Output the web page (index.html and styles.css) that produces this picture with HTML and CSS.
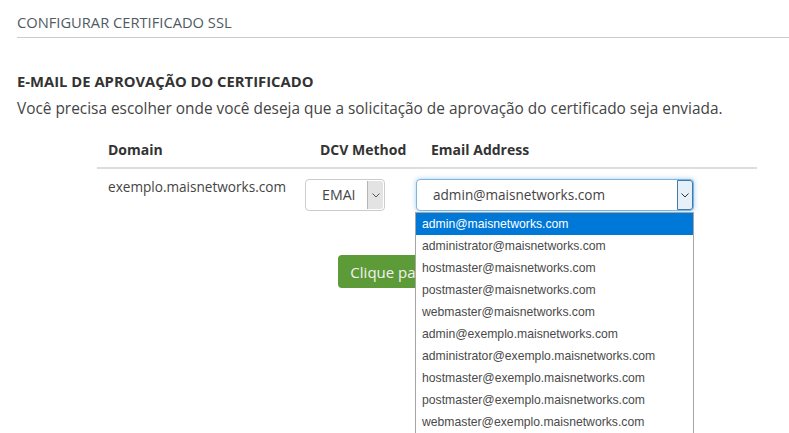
FILE: index.html
```html
<!DOCTYPE html>
<html lang="pt-BR">
<head>
    <meta charset="UTF-8">
    <meta name="viewport" content="width=device-width, initial-scale=1.0">
    <title>Configurar Certificado SSL</title>
    <link rel="stylesheet" href="styles.css">
</head>
<body>
    <div class="page">
        <h2 class="title">CONFIGURAR CERTIFICADO SSL</h2>

        <h3 class="section">E-MAIL DE APROVAÇÃO DO CERTIFICADO</h3>
        <p class="intro">Você precisa escolher onde você deseja que a solicitação de aprovação do certificado seja enviada.</p>

        <div class="dcv-table">
            <div class="th th-domain">Domain</div>
            <div class="th th-method">DCV Method</div>
            <div class="th th-email">Email Address</div>

            <div class="td td-domain">exemplo.maisnetworks.com</div>
            <div class="td td-method">
                <div class="select select-method">
                    <span class="select-value">EMAI</span>
                    <span class="select-arrow">
                        <svg width="8" height="5" viewBox="0 0 8 5"><path d="M0.5 0.5 L4 4 L7.5 0.5" fill="none" stroke="#555" stroke-width="1"/></svg>
                    </span>
                </div>
            </div>
            <div class="td td-email">
                <div class="select select-email">
                    <span class="select-value">admin@maisnetworks.com</span>
                    <span class="select-arrow">
                        <svg width="8" height="5" viewBox="0 0 8 5"><path d="M0.5 0.5 L4 4 L7.5 0.5" fill="none" stroke="#333" stroke-width="1"/></svg>
                    </span>
                    <ul class="options">
                        <li class="selected">admin@maisnetworks.com</li>
                        <li>administrator@maisnetworks.com</li>
                        <li>hostmaster@maisnetworks.com</li>
                        <li>postmaster@maisnetworks.com</li>
                        <li>webmaster@maisnetworks.com</li>
                        <li>admin@exemplo.maisnetworks.com</li>
                        <li>administrator@exemplo.maisnetworks.com</li>
                        <li>hostmaster@exemplo.maisnetworks.com</li>
                        <li>postmaster@exemplo.maisnetworks.com</li>
                        <li>webmaster@exemplo.maisnetworks.com</li>
                    </ul>
                </div>
            </div>
        </div>

        <div class="actions">
            <button class="btn-continue">Clique para Continuar</button>
        </div>
    </div>
</body>
</html>
```

FILE: styles.css
```css
html, body {
    height: 100%;
}

body {
    margin: 0;
    font-family: 'Open Sans', sans-serif;
    color: #444;
    background: #fff;
    overflow: hidden;
}

.page {
    min-height: 100%;
    box-sizing: border-box;
    padding: 12px 0 0 17px;
}

.title {
    margin: 0;
    padding-bottom: 5px;
    border-bottom: 1px solid #ccc;
    font-size: 14.7px;
    line-height: 20px;
    font-weight: 400;
    color: #4f5b63;
}

.section {
    margin: 33px 0 0;
    font-size: 14.8px;
    line-height: 20px;
    font-weight: 700;
    color: #333;
}

.intro {
    margin: 7px 0 0;
    font-size: 15.4px;
    line-height: 22px;
    color: #444;
}

.dcv-table {
    display: grid;
    grid-template-columns: 200px 111px 1fr;
    width: 660px;
    margin: 20px 0 0 80px;
    font-size: 14px;
    line-height: 20px;
}

.th {
    font-weight: 700;
    color: #333;
    padding-bottom: 7px;
    border-bottom: 2px solid #ddd;
}

.th-domain, .td-domain {
    padding-left: 11px;
}

.th-method, .th-email {
    padding-left: 23px;
}

.td {
    padding-bottom: 10px;
}

.td-domain {
    padding-top: 8px;
    font-size: 13.6px;
}

.td-method, .td-email {
    padding-top: 10px;
    padding-left: 8px;
}

.select {
    position: relative;
    display: flex;
    align-items: stretch;
    height: 32px;
    box-sizing: border-box;
    border: 1px solid #ccc;
    border-radius: 4px;
    background: #fff;
}

.select-value {
    flex: 1;
    display: flex;
    align-items: center;
    color: #444;
}

.select-arrow {
    display: flex;
    align-items: center;
    justify-content: center;
    width: 16px;
    margin: 1px 1px 1px 0;
    box-sizing: border-box;
    border-left: 1px solid #b5b5b5;
    background: #e3e3e3;
    border-radius: 0 3px 3px 0;
}

.select-method {
    width: 80px;
}

.select-method .select-value {
    padding-left: 16px;
    font-size: 14.2px;
}

.select-email {
    width: 278px;
    border-color: #7fb4dd;
    box-shadow: 0 0 5px rgba(102, 175, 233, 0.6);
}

.select-email .select-value {
    padding-left: 16px;
    font-size: 13.6px;
}

.select-email .select-arrow {
    border: 1px solid #3d7bad;
    background: #e6f0f8;
    margin: 0;
    border-radius: 0 3px 3px 0;
}

.options {
    position: absolute;
    z-index: 10;
    top: 32px;
    left: -2px;
    width: 279px;
    box-sizing: border-box;
    margin: 0;
    padding: 0;
    list-style: none;
    background: #fff;
    border: 1px solid #a5a5a5;
    font-family: 'Liberation Sans', Arial, sans-serif;
    font-size: 12.2px;
    color: #4a4a4a;
}

.options li {
    height: 22px;
    line-height: 22px;
    padding-left: 6px;
}

.options li.selected {
    background: #0078d7;
    color: #fff;
}

.actions {
    width: 660px;
    margin: 34px 0 0 80px;
    text-align: center;
}

.btn-continue {
    height: 33px;
    padding: 0 12px;
    border: none;
    border-radius: 4px;
    background: #5c9b38;
    color: #f2f2f2;
    font-family: 'Open Sans', sans-serif;
    font-size: 15px;
}
```
